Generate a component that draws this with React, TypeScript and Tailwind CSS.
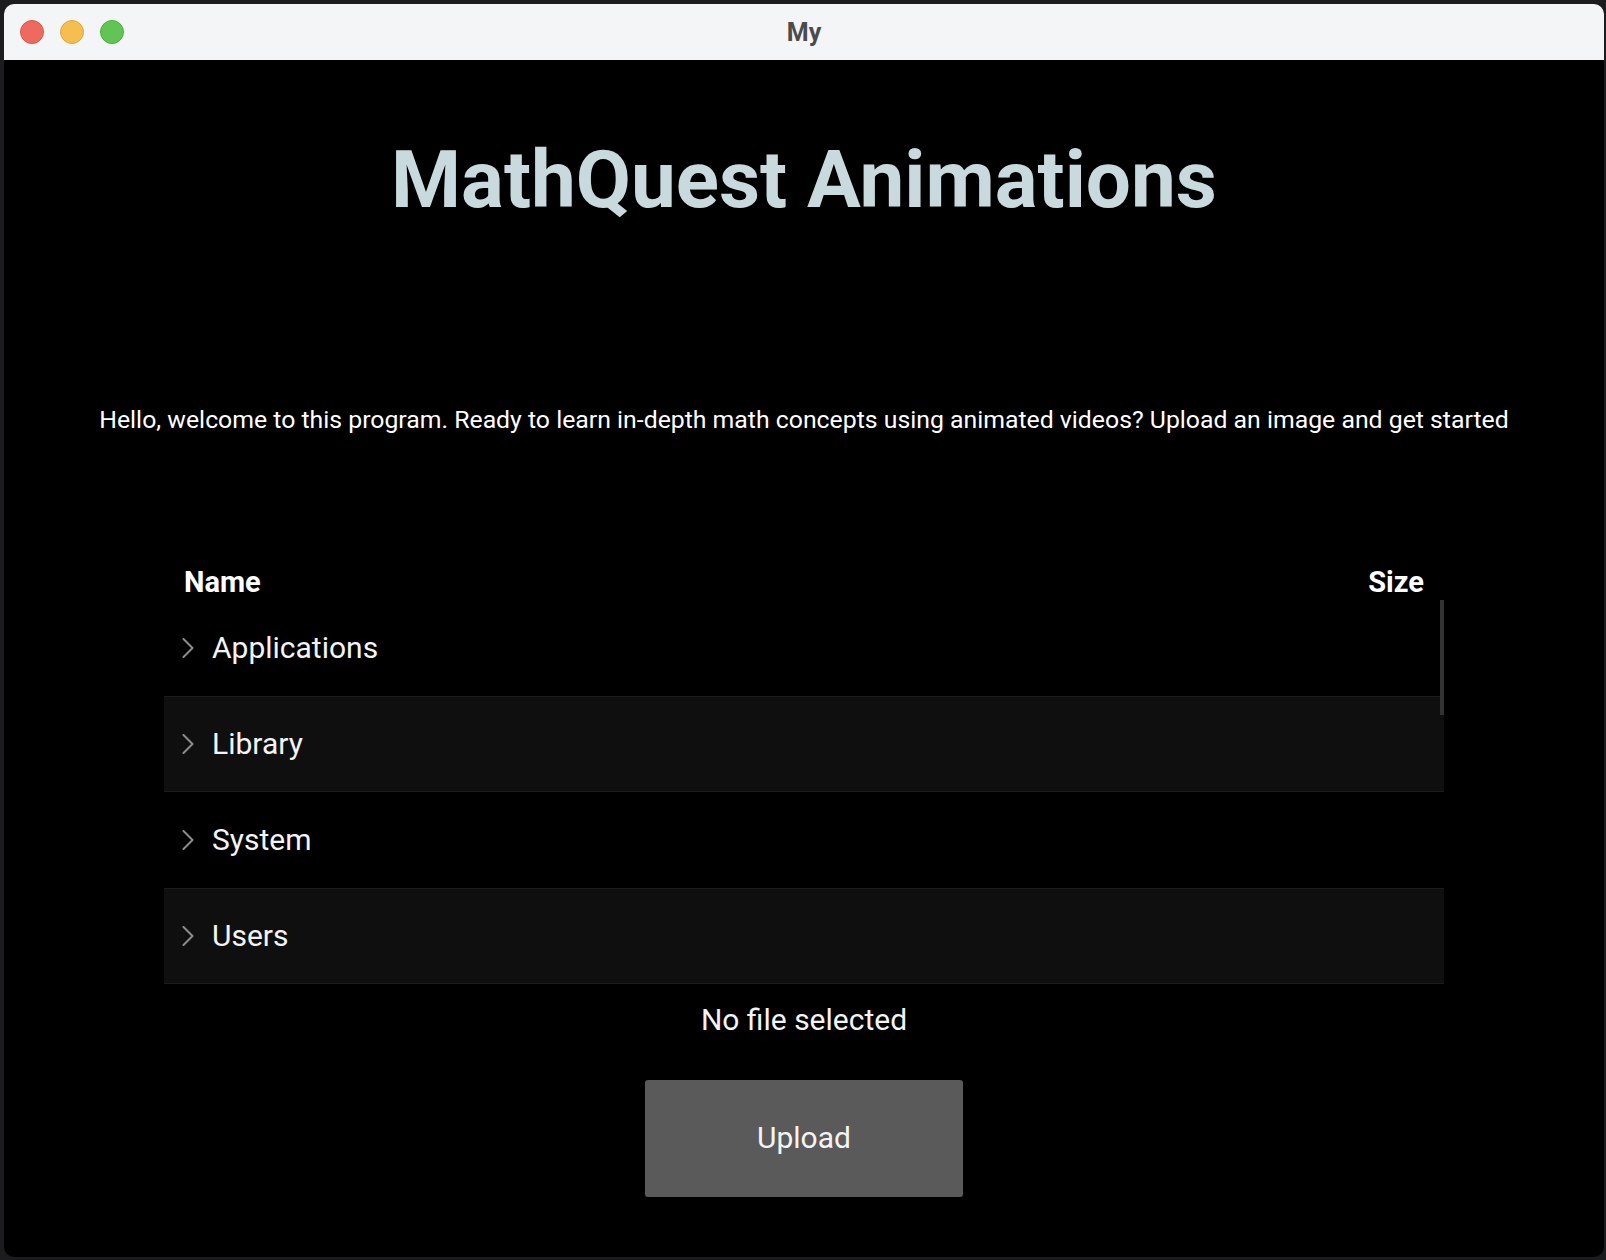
import React from "react";

const folders = ["Applications", "Library", "System", "Users", "Volumes"];

function Chevron() {
    return (
        <svg width="12" height="20" viewBox="0 0 12 20" className="shrink-0">
            <polyline
                points="1.5,1 10.5,10 1.5,19"
                fill="none"
                stroke="#8d8d8d"
                strokeWidth="2"
                strokeLinecap="round"
                strokeLinejoin="round"
            />
        </svg>
    );
}

function TrafficLights() {
    return (
        <div className="flex items-center gap-[16px] pl-[16px]">
            <span className="h-[24px] w-[24px] rounded-full bg-[#ee6a5f] border border-[#d9574d]" />
            <span className="h-[24px] w-[24px] rounded-full bg-[#f5bf4f] border border-[#dea73c]" />
            <span className="h-[24px] w-[24px] rounded-full bg-[#61c554] border border-[#4fae43]" />
        </div>
    );
}

export default function App() {
    return (
        <div className="h-[1260px] w-[1606px] bg-[#1c1c1e] pl-[4px] pt-[4px] font-['Roboto','Liberation_Sans',sans-serif]">
            <div className="flex h-[1253px] w-[1600px] flex-col overflow-hidden rounded-[10px] bg-black">
                {/* title bar */}
                <div className="grid h-[56px] grid-cols-[1fr_auto_1fr] items-center bg-[#f4f5f7]">
                    <TrafficLights />
                    <span className="text-[25px] font-bold leading-none text-[#4b4b4b]">
                        My
                    </span>
                    <div />
                </div>

                <div className="flex flex-1 flex-col items-center">
                    <h1 className="mt-[80px] text-[80px] font-bold leading-none text-[#c8dadd]">
                        MathQuest Animations
                    </h1>

                    <p className="mt-[188px] text-[24.8px] leading-none text-white">
                        Hello, welcome to this program. Ready to learn in-depth
                        math concepts using animated videos? Upload an image and
                        get started
                    </p>

                    <div className="mt-[135px] w-[1280px]">
                        <div className="flex justify-between px-[20px] text-[29px] font-bold leading-none text-white">
                            <span>Name</span>
                            <span>Size</span>
                        </div>

                        <div className="relative mt-[3px] h-[420px] overflow-hidden">
                            {folders.map((name, i) => (
                                <div
                                    key={name}
                                    className={`flex h-[96px] items-center gap-[18px] pl-[18px] ${
                                        i % 2 === 1
                                            ? "border-y border-[#1d1d1d] bg-[#0f0f0f]"
                                            : ""
                                    }`}
                                >
                                    <Chevron />
                                    <span className="text-[30px] leading-none text-[#f4f4f4]">
                                        {name}
                                    </span>
                                </div>
                            ))}
                            <div className="absolute right-0 top-0 h-[115px] w-[4px] bg-[#333333]" />
                        </div>
                    </div>

                    <span className="-mt-[15px] text-[30px] leading-none text-[#f4f4f4]">
                        No file selected
                    </span>

                    <button className="mt-[45px] flex h-[117px] w-[318px] items-center justify-center rounded-[3px] bg-[#5a5a5a] text-[30px] leading-none text-[#f4f4f4]">
                        Upload
                    </button>
                </div>
            </div>
        </div>
    );
}
